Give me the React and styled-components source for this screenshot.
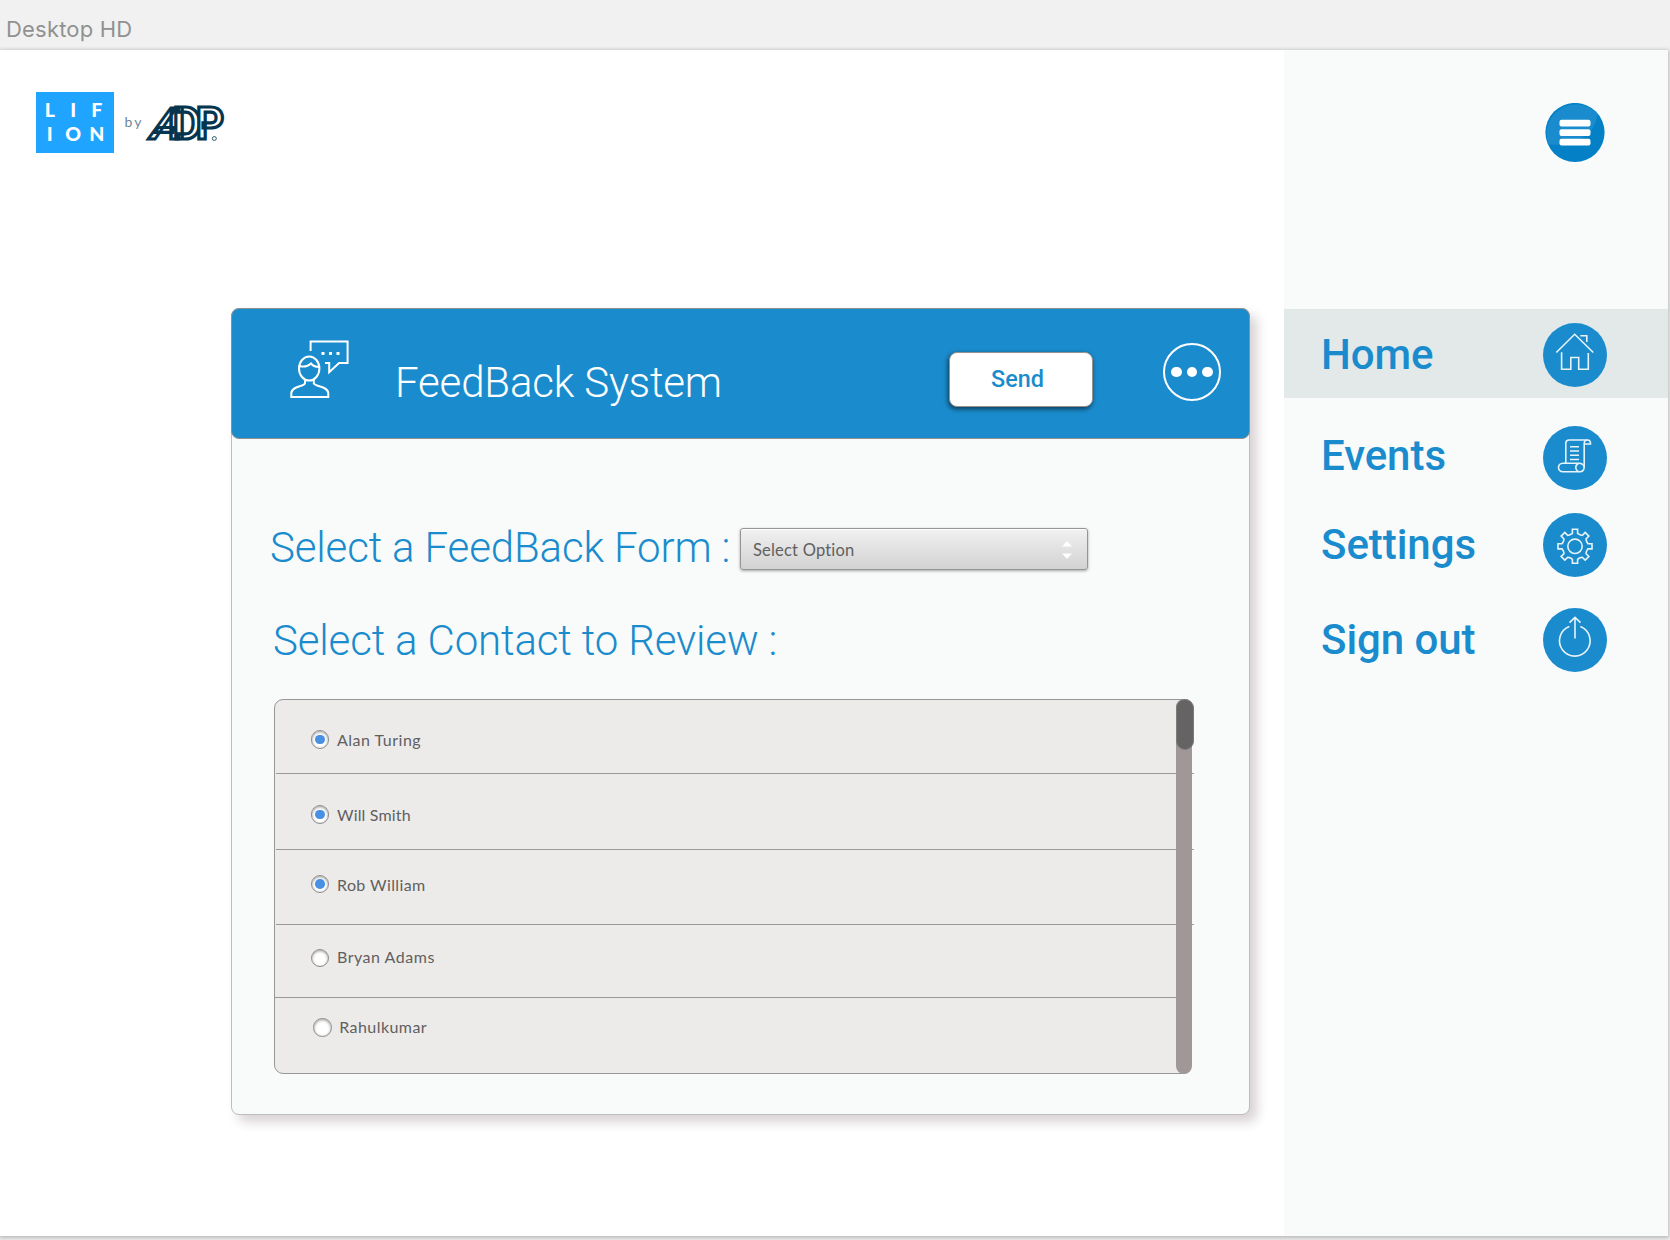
import React, { useState } from "react";
import styled, { createGlobalStyle } from "styled-components";

const BLUE = "#1a8ccd";

const GlobalStyle = createGlobalStyle`
  *, *::before, *::after { box-sizing: border-box; }
  body { margin: 0; background: #f1f1f1; overflow: hidden; }
  button { font: inherit; border: 0; padding: 0; background: none; }
`;

const Artboard = styled.div`
  width: 1670px;
  height: 1240px;
  display: flex;
  flex-direction: column;
  overflow: hidden;
  background: #f1f1f1;
  font-family: Roboto, "Liberation Sans", sans-serif;
`;

const BoardName = styled.div`
  height: 50px;
  flex: none;
  padding: 15px 0 0 6px;
  font: 400 22px/28px Inter, "Liberation Sans", sans-serif;
  letter-spacing: 0.2px;
  color: #919191;
`;

const Sheet = styled.div`
  width: 1668px;
  height: 1186px;
  flex: none;
  display: flex;
  background: #fff;
  box-shadow: 0 1px 4px 1px rgba(0, 0, 0, 0.24);
`;

const Main = styled.main`
  width: 1283.5px;
  flex: none;
  padding: 42px 0 0 36px;
`;

const Brand = styled.div`
  display: flex;
  height: 61px;
`;

const LifionMark = styled.div`
  width: 77.5px;
  height: 60.5px;
  padding: 5.5px 4px 0 2px;
  background: #1fa4ff;
  color: #fff;
  display: grid;
  grid-template-columns: repeat(3, 23.5px);
  grid-template-rows: 24.5px 24.5px;
  font: 900 19.5px/24px Lato, sans-serif;
  justify-items: center;
`;

const By = styled.span`
  margin: 21px 0 0 11px;
  width: 21px;
  font: 400 14px/18px Lato, sans-serif;
  letter-spacing: 2px;
  color: #70879a;
`;

const Card = styled.section`
  width: 1019px;
  height: 807px;
  margin: 155px 0 0 195px;
  border: 1px solid #bcbebe;
  border-radius: 8px;
  background: #f9fbfa;
  box-shadow: 7px 7px 12px #d9d2d5;
`;

const CardHeader = styled.header`
  height: 131px;
  margin: -1px;
  padding-left: 58px;
  display: flex;
  border: 1px solid #8f9191;
  border-radius: 8px;
  background: ${BLUE};
`;

const FeedbackIcon = styled.svg`
  width: 60px;
  height: 60px;
  margin-top: 30px;
  flex: none;
  fill: none;
  stroke: #fff;
  stroke-width: 2;
`;

const Title = styled.h1`
  width: 554px;
  margin: 49px 0 0 45px;
  font-size: 42px;
  font-weight: 300;
  line-height: 50px;
  letter-spacing: -0.16px;
  color: #fff;
  white-space: nowrap;
`;

const SendButton = styled.button`
  && {
    width: 144px;
    height: 55px;
    margin-top: 42.5px;
    padding: 0 7px 0 0;
    flex: none;
    border: 1px solid #97928f;
    border-radius: 8px;
    background: #fff;
    box-shadow: -1px 2px 5px rgba(0, 0, 0, 0.6);
    color: ${BLUE};
    font: 500 23.4px/52px Roboto, sans-serif;
  }
`;

const MoreButton = styled.button`
  && {
    width: 58px;
    height: 58px;
    margin: 34px 0 0 70px;
    flex: none;
    display: flex;
    align-items: center;
    justify-content: center;
    gap: 5px;
    border: 2.6px solid #fff;
    border-radius: 50%;
  }
`;

const Dot = styled.i`
  width: 10.6px;
  height: 10.6px;
  flex: none;
  border-radius: 50%;
  background: #fff;
`;

const Field = styled.div`
  display: flex;
  height: 50px;
  margin: 84.5px 0 0 38px;
`;

const Prompt = styled.h2`
  width: ${(p) => p.$width || 500}px;
  margin: 0;
  flex: none;
  font-size: 42px;
  font-weight: 300;
  line-height: 50px;
  letter-spacing: -0.15px;
  color: ${BLUE};
  white-space: nowrap;
`;

const Select = styled.button`
  && {
    width: 348px;
    height: 42px;
    margin-top: 5.5px;
    padding: 1px 15px 0 12px;
    display: flex;
    align-items: center;
    justify-content: space-between;
    border: 1px solid #959595;
    border-radius: 3px;
    background: linear-gradient(#f1f1f1, #d2d2d2);
    box-shadow: 0 1px 3px rgba(0, 0, 0, 0.35), inset 0 1px 0 #fff;
    font: 400 16.5px/24px Lato, sans-serif;
    letter-spacing: 0.2px;
    color: #606060;
  }
`;

const Stepper = styled.svg`
  width: 10px;
  height: 18px;
  margin-top: 1px;
  fill: #fff;
`;

const ContactPrompt = styled(Prompt)`
  margin: 43px 0 0 41px;
`;

const ContactList = styled.div`
  position: relative;
  width: 917px;
  height: 375px;
  margin: 33.5px 0 0 42px;
  border: 1px solid #979797;
  border-radius: 9px;
  background: #edebea;
`;

const Contact = styled.label`
  display: flex;
  align-items: flex-start;
  gap: 7.5px;
  width: ${(p) => (p.$short ? 903 : 918)}px;
  height: ${(p) => p.$height}px;
  margin-left: ${(p) => (p.$short ? 0 : 1)}px;
  padding: ${(p) => p.$top}px 0 0 ${(p) => p.$left}px;
  border-bottom: ${(p) => (p.$last ? 0 : 1)}px solid #9a9a9a;
`;

const Radio = styled.span`
  width: 18.6px;
  height: 18.6px;
  flex: none;
  display: flex;
  align-items: center;
  justify-content: center;
  border: 1px solid #8d8d8d;
  border-radius: 50%;
  background: #fff;
  box-shadow: inset 0 1px 3px rgba(0, 0, 0, 0.4);

  &::after {
    content: "";
    width: 9.6px;
    height: 9.6px;
    border-radius: 50%;
    background: ${(p) => (p.$on ? "#4a90e2" : "transparent")};
  }
`;

const Name = styled.span`
  margin-top: ${(p) => p.$shift}px;
  font: 400 16px/20px Lato, sans-serif;
  letter-spacing: ${(p) => p.$tracking}px;
  color: #606060;
`;

const Track = styled.div`
  position: absolute;
  top: -1px;
  left: 901px;
  width: 16px;
  height: 375px;
  border-radius: 8px;
  background: #a09898;
`;

const Thumb = styled.div`
  width: 18px;
  height: 51px;
  border: 1px solid #7d7b7b;
  border-radius: 9px;
  background: #656363;
`;

const Sidebar = styled.aside`
  flex: 1;
  background: #f9fbfa;
`;

const MenuButton = styled.button`
  display: flex;
  width: 60px;
  height: 60px;
  margin: 52.5px 0 0 261px;
`;

const Nav = styled.nav`
  margin-top: 146px;
`;

const NavItem = styled.a`
  display: flex;
  align-items: center;
  justify-content: space-between;
  height: ${(p) => p.$height}px;
  margin-bottom: ${(p) => p.$gap}px;
  padding: ${(p) => (p.$active ? 4.8 : 0)}px 61.5px 0 37.5px;
  background: ${(p) => (p.$active ? "#e3e9e8" : "transparent")};
`;

const NavLabel = styled.span`
  margin-top: ${(p) => p.$lift || 0}px;
  font-size: 42px;
  font-weight: 500;
  line-height: 50px;
  letter-spacing: -0.05px;
  color: ${BLUE};
`;

const Disc = styled.span`
  width: 64px;
  height: 64px;
  display: flex;
  border-radius: 50%;
  background: ${BLUE};
`;

const DiscIcon = styled.svg`
  width: 64px;
  height: 64px;
  fill: none;
  stroke: #e6f3fa;
  stroke-width: 1.6;
`;

const Adp = styled.svg`
  width: 80px;
  height: 50px;
  overflow: visible;
  fill: #fff;
  stroke: #06364f;
  stroke-width: 3.2;
  font: 700 43.5px Roboto, sans-serif;
`;

function AdpLogo() {
  return (
    <Adp viewBox="0 -12 80 50">
      <text transform="translate(2 35) skewX(-19)" textLength="30" lengthAdjust="spacingAndGlyphs">A</text>
      <text x="27 50" y="35">DP</text>
      <circle cx="68.3" cy="34.5" r="2" strokeWidth="0.8" />
    </Adp>
  );
}

function MenuIcon() {
  return (
    <svg width="60" height="60" viewBox="0 0 60 60">
      <circle cx="30" cy="29.5" r="29.6" fill="#0480c6" />
      <path d="M3.6 41.5A29.3 29.3 0 0 1 52.5 11C51 27 37 43.5 3.6 41.5Z" fill="#1a8ccd" />
      {[16.8, 26.3, 35.8].map((y) => (
        <rect key={y} x="14.5" y={y} width="31" height="6.6" rx="2" fill="#fff" />
      ))}
    </svg>
  );
}

const gearPath = (() => {
  const pts = [];
  for (let i = 0; i < 8; i++) {
    const a = (i * Math.PI) / 4;
    [[-4, -12], [-2.6, -13], [-2.6, -17], [2.6, -17], [2.6, -13], [4, -12]].forEach(([x, y]) => {
      pts.push(
        `${(32 + x * Math.cos(a) - y * Math.sin(a)).toFixed(2)} ${(33.3 + x * Math.sin(a) + y * Math.cos(a)).toFixed(2)}`
      );
    });
  }
  return `M${pts.join("L")}Z`;
})();

const icons = {
  home: (
    <>
      <path d="M13.3 29.5L31.7 11.3L50.3 29.5" />
      <path d="M37.3 12.7H43.8V19" />
      <path d="M18.6 29.2V46.2H27.8V34.5H35.7V46.2H45.3V30" />
    </>
  ),
  events: (
    <>
      <path d="M22.8 37V17.5C22.8 15.3 24 14 26.2 14H44.5Q47.7 14 47.5 18H41.2" />
      <path d="M44 14Q41.2 14.2 41.2 18V40.5C41.2 44 39.8 45.7 37 45.7H20C14 45.7 14 37.2 20 37.2H35.5" />
      <path d="M35.5 37.2C31.8 39.5 31.8 43.5 35.5 45.7M35.5 37.2Q40 37 41 40.5" />
      <path d="M27 20.8H36M27 25H36M27 29.3H36M27 33.5H36" />
    </>
  ),
  settings: (
    <>
      <path d={gearPath} />
      <circle cx="32" cy="33.3" r="7.2" />
    </>
  ),
  signout: (
    <>
      <path d="M26.3 18.5A15.3 15.3 0 1 0 37.3 18.5" />
      <path d="M32 30.5V9.8M26.5 14.6L32 9.3L37.5 14.6" />
    </>
  ),
};

const navItems = [
  { label: "Home", icon: "home", height: 89, gap: 28.8, active: true },
  { label: "Events", icon: "events", height: 64, gap: 23, lift: -5 },
  { label: "Settings", icon: "settings", height: 64, gap: 31 },
  { label: "Sign out", icon: "signout", height: 64, gap: 0 },
];

const people = [
  { name: "Alan Turing", on: true, height: 74, top: 30, shift: -0.5, tracking: 0.5 },
  { name: "Will Smith", on: true, height: 76, top: 31, shift: -0.5, tracking: 0.17 },
  { name: "Rob William", on: true, height: 75, top: 24.7, shift: 0, tracking: 0.4 },
  { name: "Bryan Adams", on: false, height: 73, top: 23.7, shift: -2, tracking: 0.52 },
  { name: "Rahulkumar", on: false, height: 74, top: 20.2, shift: -1, tracking: 0.43, indent: 2.3 },
];

export default function App() {
  const [chosen, setChosen] = useState(people.map((p) => p.on));
  const toggle = (i) => setChosen(chosen.map((v, k) => (k === i ? !v : v)));

  return (
    <Artboard>
      <GlobalStyle />
      <BoardName>Desktop HD</BoardName>
      <Sheet>
        <Main>
          <Brand>
            <LifionMark>
              {"LIFION".split("").map((c, i) => (
                <span key={i}>{c}</span>
              ))}
            </LifionMark>
            <By>by</By>
            <AdpLogo />
          </Brand>
          <Card>
            <CardHeader>
              <FeedbackIcon viewBox="0 0 60 60">
                <path d="M20.6 12V2.4H57.6V24H49L39.2 33.2V24H35" />
                <ellipse cx="19.2" cy="29.5" rx="10.2" ry="12" />
                <path d="M9.5 27Q16 29 21 24.5Q24 28 29 28" />
                <path d="M15 41V44.5C13 48 1.3 47 1.3 54.5V58H38.3V54.5C38.3 47 26 48 23.8 44.5V41" />
                <path d="M31.5 14.5H34.5M39 14.5H42M46.5 14.5H49.5" strokeWidth="3" />
              </FeedbackIcon>
              <Title>FeedBack System</Title>
              <SendButton>Send</SendButton>
              <MoreButton aria-label="More">
                <Dot />
                <Dot />
                <Dot />
              </MoreButton>
            </CardHeader>
            <Field>
              <Prompt $width={470}>Select a FeedBack Form :</Prompt>
              <Select>
                Select Option
                <Stepper viewBox="0 0 10 18">
                  <path d="M0 5.5L5 0L10 5.5ZM0 12.5L5 18L10 12.5Z" />
                </Stepper>
              </Select>
            </Field>
            <ContactPrompt>Select a Contact to Review :</ContactPrompt>
            <ContactList>
              {people.map((p, i) => (
                <Contact
                  key={p.name}
                  $height={p.height}
                  $top={p.top}
                  $left={(i > 2 ? 35.9 : 34.9) + (p.indent || 0)}
                  $short={i > 2}
                  $last={i === people.length - 1}
                  onClick={() => toggle(i)}
                >
                  <Radio $on={chosen[i]} />
                  <Name $shift={p.shift} $tracking={p.tracking}>{p.name}</Name>
                </Contact>
              ))}
              <Track>
                <Thumb />
              </Track>
            </ContactList>
          </Card>
        </Main>
        <Sidebar>
          <MenuButton aria-label="Menu">
            <MenuIcon />
          </MenuButton>
          <Nav>
            {navItems.map((n) => (
              <NavItem key={n.label} $height={n.height} $gap={n.gap} $active={n.active}>
                <NavLabel $lift={n.lift}>{n.label}</NavLabel>
                <Disc>
                  <DiscIcon viewBox="0 0 64 64">{icons[n.icon]}</DiscIcon>
                </Disc>
              </NavItem>
            ))}
          </Nav>
        </Sidebar>
      </Sheet>
    </Artboard>
  );
}
